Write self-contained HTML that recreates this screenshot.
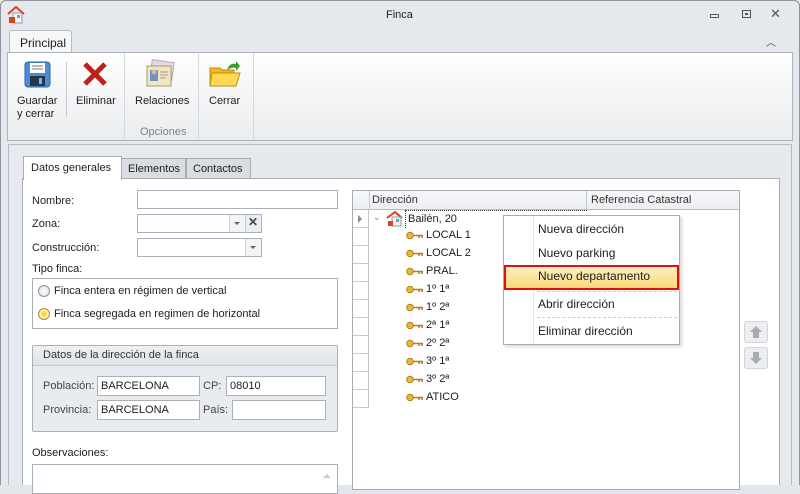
<!DOCTYPE html>
<html><head><meta charset="utf-8"><style>
*{box-sizing:border-box;margin:0;padding:0}
body{width:800px;height:485px;overflow:hidden;background:#e3e6ea;font-family:"Liberation Sans",sans-serif;font-size:11px;color:#1e1e1e;position:relative}
.a{position:absolute}
.inp{position:absolute;background:#fff;border:1px solid #abb0b8}
.t{position:absolute;white-space:nowrap}
</style></head><body>
<div class="a" style="left:0;top:0;width:800px;height:485px;border:1px solid #8f959c;border-bottom:none;border-radius:6px 6px 0 0;background:#e5e8ec"></div>
<svg class="a" style="left:7px;top:6px" width="18" height="18" viewBox="0 0 18 18"><path d="M1 8 L9 1 L17 8" fill="none" stroke="#d8441c" stroke-width="2"/><rect x="6" y="7" width="9" height="10" fill="#f4f4f4" stroke="#8a9aa8"/><rect x="2" y="11" width="6" height="6" fill="#d8441c"/><rect x="10" y="9" width="3" height="3" fill="#6aa0d8"/></svg>
<div class="t" style="left:386px;top:9px;font-size:11px">Finca</div>
<div class="a" style="left:710px;top:14px;width:9px;height:4px;border:1px solid #555;border-radius:1px"></div>
<div class="a" style="left:742px;top:10px;width:9px;height:8px;border:1px solid #555"><div style="margin:2px;width:3px;height:2px;border:1px solid #555"></div></div>
<div class="t" style="left:770px;top:6px;font-size:13px;color:#555">✕</div>
<div class="t" style="left:766px;top:34px;font-size:10px;color:#444">︿</div>
<div class="a" style="left:9px;top:30px;width:63px;height:23px;background:#f6f7f8;border:1px solid #b8bcc2;border-bottom:none;border-radius:3px 3px 0 0"></div>
<div class="t" style="left:20px;top:36px;font-size:12px">Principal</div>
<div class="a" style="left:7px;top:52px;width:786px;height:89px;background:linear-gradient(#fefefe,#eaecee);border:1px solid #aeb3ba"></div>
<div class="a" style="left:66px;top:62px;width:1px;height:55px;background:#c8ccd1"></div>
<div class="a" style="left:124px;top:53px;width:1px;height:87px;background:#d5d8dc"></div>
<div class="a" style="left:198px;top:53px;width:1px;height:87px;background:#d5d8dc"></div>
<div class="a" style="left:253px;top:53px;width:1px;height:87px;background:#d5d8dc"></div>
<svg class="a" style="left:24px;top:61px" width="27" height="27" viewBox="0 0 27 27"><rect x="1" y="1" width="25" height="25" rx="3" fill="#4d8ed2" stroke="#2f63a0"/><rect x="6" y="2" width="15" height="10" fill="#fff"/><path d="M8 5h11M8 8h11" stroke="#777"/><rect x="6" y="15" width="15" height="10" fill="#26364a"/><rect x="15" y="17" width="3" height="6" fill="#7bb3e8"/></svg>
<svg class="a" style="left:82px;top:62px" width="26" height="24" viewBox="0 0 26 24"><path d="M3 2 L23 22 M23 2 L3 22" stroke="#c0201c" stroke-width="5"/></svg>
<svg class="a" style="left:145px;top:58px" width="32" height="32" viewBox="0 0 32 32"><rect x="6" y="3" width="22" height="18" fill="#e7d6f0" stroke="#aaa" transform="rotate(8 16 12)"/><rect x="2" y="8" width="24" height="20" fill="#f2e6c0" stroke="#a89a70"/><rect x="5" y="12" width="8" height="11" fill="#6f93c4"/><circle cx="9" cy="14" r="2.5" fill="#e9b48e"/><path d="M15 14h8M15 17h8M15 20h6" stroke="#999"/></svg>
<svg class="a" style="left:209px;top:58px" width="32" height="32" viewBox="0 0 32 32"><path d="M1 10h10l2 2h12v16H1z" fill="#f3b81c" stroke="#c08a10"/><path d="M3 15h28l-4 13H1z" fill="#ffd955" stroke="#c08a10"/><path d="M18 12 C20 6 24 5 27 6 L27 3 L31 8 L27 13 L27 10 C24 9 21 10 18 12z" fill="#3aa22a"/></svg>
<div class="t" style="left:17px;top:95px;font-size:11px;line-height:13px">Guardar<br>y cerrar</div>
<div class="t" style="left:76px;top:95px">Eliminar</div>
<div class="t" style="left:135px;top:95px">Relaciones</div>
<div class="t" style="left:209px;top:95px">Cerrar</div>
<div class="t" style="left:140px;top:126px;color:#7a8190">Opciones</div>
<div class="a" style="left:8px;top:144px;width:784px;height:341px;background:#e6e9ed;border:1px solid #b6bbc2;border-bottom:none"></div>
<div class="a" style="left:121px;top:158px;width:65px;height:21px;background:#d9dde2;border:1px solid #a8adb4"></div>
<div class="t" style="left:128px;top:163px">Elementos</div>
<div class="a" style="left:186px;top:158px;width:65px;height:21px;background:#d9dde2;border:1px solid #a8adb4"></div>
<div class="t" style="left:193px;top:163px">Contactos</div>
<div class="a" style="left:22px;top:178px;width:758px;height:307px;background:#fff;border:1px solid #a8adb4;border-bottom:none"></div>
<div class="a" style="left:23px;top:156px;width:99px;height:24px;background:#fff;border:1px solid #a8adb4;border-bottom:none"></div>
<div class="t" style="left:31px;top:162px">Datos generales</div>
<div class="t" style="left:32px;top:195px">Nombre:</div>
<div class="inp" style="left:137px;top:190px;width:201px;height:19px"></div>
<div class="t" style="left:32px;top:218px">Zona:</div>
<div class="inp" style="left:137px;top:214px;width:125px;height:19px"></div>
<div class="a" style="left:229px;top:215px;width:16px;height:17px;border-left:1px solid #d0d3d8;background:#f2f3f5"></div>
<div class="a" style="left:234px;top:222px;border:3px solid transparent;border-top:3px solid #666"></div>
<div class="a" style="left:245px;top:215px;width:16px;height:17px;background:#eceef1;border-left:1px solid #c4c8cd"></div>
<div class="t" style="left:248px;top:215px;font-size:12px;font-weight:bold;color:#444">✕</div>
<div class="t" style="left:32px;top:242px">Construcción:</div>
<div class="inp" style="left:137px;top:238px;width:125px;height:19px"></div>
<div class="a" style="left:245px;top:239px;width:16px;height:17px;border-left:1px solid #d0d3d8;background:#f2f3f5"></div>
<div class="a" style="left:250px;top:246px;border:3px solid transparent;border-top:3px solid #666"></div>
<div class="t" style="left:32px;top:263px">Tipo finca:</div>
<div class="a" style="left:32px;top:278px;width:306px;height:51px;border:1px solid #abb0b8"></div>
<div class="a" style="left:38px;top:285px;width:12px;height:12px;border-radius:50%;border:1px solid #8f959c;background:radial-gradient(#fff,#d8dadd)"></div>
<div class="t" style="left:54px;top:285px">Finca entera en régimen de vertical</div>
<div class="a" style="left:38px;top:308px;width:12px;height:12px;border-radius:50%;border:1px solid #b38a30;background:radial-gradient(#ffd640 35%,#fff3c8 45%,#f2e0a8)"></div>
<div class="t" style="left:54px;top:308px">Finca segregada en regimen de horizontal</div>
<div class="a" style="left:32px;top:345px;width:306px;height:87px;border:1px solid #abb0b8;background:#e8ebef;border-radius:2px"></div>
<div class="a" style="left:33px;top:346px;width:304px;height:20px;background:linear-gradient(#eef0f3,#dfe2e6);border-bottom:1px solid #c4c8ce"></div>
<div class="t" style="left:43px;top:349px;color:#333">Datos de la dirección de la finca</div>
<div class="t" style="left:43px;top:380px;color:#444">Población:</div>
<div class="inp" style="left:97px;top:376px;width:103px;height:20px"></div>
<div class="t" style="left:101px;top:380px">BARCELONA</div>
<div class="t" style="left:203px;top:380px;color:#444">CP:</div>
<div class="inp" style="left:226px;top:376px;width:100px;height:20px"></div>
<div class="t" style="left:230px;top:380px">08010</div>
<div class="t" style="left:43px;top:404px;color:#444">Provincia:</div>
<div class="inp" style="left:97px;top:400px;width:103px;height:20px"></div>
<div class="t" style="left:101px;top:404px">BARCELONA</div>
<div class="t" style="left:203px;top:404px;color:#444">País:</div>
<div class="inp" style="left:232px;top:400px;width:94px;height:20px"></div>
<div class="t" style="left:32px;top:447px">Observaciones:</div>
<div class="inp" style="left:32px;top:464px;width:306px;height:30px"></div>
<div class="a" style="left:323px;top:470px;border:4px solid transparent;border-bottom:4px solid #c8cbd0"></div>
<div class="a" style="left:352px;top:190px;width:388px;height:300px;border:1px solid #a8adb4;background:#fff"></div>
<div class="a" style="left:353px;top:191px;width:386px;height:19px;background:linear-gradient(#f7f8f9,#eceef1);border-bottom:1px solid #b8bcc2"></div>
<div class="a" style="left:369px;top:191px;width:1px;height:19px;background:#c2c6cb"></div>
<div class="a" style="left:586px;top:191px;width:1px;height:19px;background:#c2c6cb"></div>
<div class="t" style="left:372px;top:194px;color:#333">Dirección</div>
<div class="t" style="left:591px;top:194px;color:#333">Referencia Catastral</div>
<div class="a" style="left:353px;top:210px;width:16px;height:198px;background:repeating-linear-gradient(#fff 0 17px,#c8ccd1 17px 18px);border-right:1px solid #c2c6cb"></div>
<div class="a" style="left:358px;top:215px;border:4px solid transparent;border-left:4px solid #888"></div>
<div class="t" style="left:373px;top:212px;font-size:9px;color:#888">⌄</div>
<svg class="a" style="left:386px;top:211px" width="17" height="16" viewBox="0 0 17 16"><path d="M1 7 L9 1 L16 7" fill="none" stroke="#d8441c" stroke-width="2"/><rect x="6" y="6" width="9" height="9" fill="#f4f4f4" stroke="#8a9aa8"/><rect x="2" y="10" width="5" height="5" fill="#d8441c"/><rect x="10" y="8" width="3" height="3" fill="#6aa0d8"/></svg>
<div class="a" style="left:405px;top:210px;width:182px;height:18px;border:1px dotted #333;border-right:none;border-bottom:none"></div>
<div class="t" style="left:408px;top:213px">Bailén, 20</div>
<div id="rows"></div>
<div class="a" style="left:503px;top:215px;width:177px;height:130px;background:#fff;border:1px solid #a8adb4;box-shadow:2px 2px 3px rgba(0,0,0,.15)"></div>
<div class="a" style="left:533px;top:216px;width:1px;height:128px;background:#e2e4e8"></div>
<div class="t" style="left:538px;top:222px;font-size:12px">Nueva dirección</div>
<div class="t" style="left:538px;top:246px;font-size:12px">Nuevo parking</div>
<div class="a" style="left:504px;top:265px;width:175px;height:25px;border:2px solid #e01010;background:linear-gradient(#fdf0c4,#f7d978)"></div>
<div class="t" style="left:538px;top:269px;font-size:12px">Nuevo departamento</div>
<div class="a" style="left:537px;top:291px;width:140px;border-top:1px dashed #ccc"></div>
<div class="t" style="left:538px;top:297px;font-size:12px">Abrir dirección</div>
<div class="a" style="left:537px;top:317px;width:140px;border-top:1px dashed #ccc"></div>
<div class="t" style="left:538px;top:324px;font-size:12px">Eliminar dirección</div>
<div class="a" style="left:744px;top:321px;width:24px;height:22px;border:1px solid #d0d3d8;border-radius:3px;background:#eceef1"></div>
<svg class="a" style="left:749px;top:325px" width="14" height="14"><path d="M7 1 L13 7 H10 V13 H4 V7 H1z" fill="#a8abb0"/></svg>
<div class="a" style="left:744px;top:347px;width:24px;height:22px;border:1px solid #d0d3d8;border-radius:3px;background:#eceef1"></div>
<svg class="a" style="left:749px;top:351px" width="14" height="14"><path d="M7 13 L13 7 H10 V1 H4 V7 H1z" fill="#a8abb0"/></svg>
<script>
var n=["LOCAL 1","LOCAL 2","PRAL.","1º 1ª","1º 2ª","2ª 1ª","2º 2ª","3º 1ª","3º 2ª","ATICO"],h="";
n.forEach(function(s,i){var y=229+i*18;
h+='<svg class="a" style="left:406px;top:'+(y+2)+'px" width="18" height="9" viewBox="0 0 18 9"><circle cx="4" cy="4.5" r="3.3" fill="#e8b838" stroke="#b08018"/><path d="M7 4.5H17M13 4.5V7M16 4.5V7" stroke="#b08018" stroke-width="1.5"/></svg><div class="t" style="left:426px;top:'+y+'px">'+s+'</div>';});
document.getElementById("rows").outerHTML=h;
</script>
</body></html>
